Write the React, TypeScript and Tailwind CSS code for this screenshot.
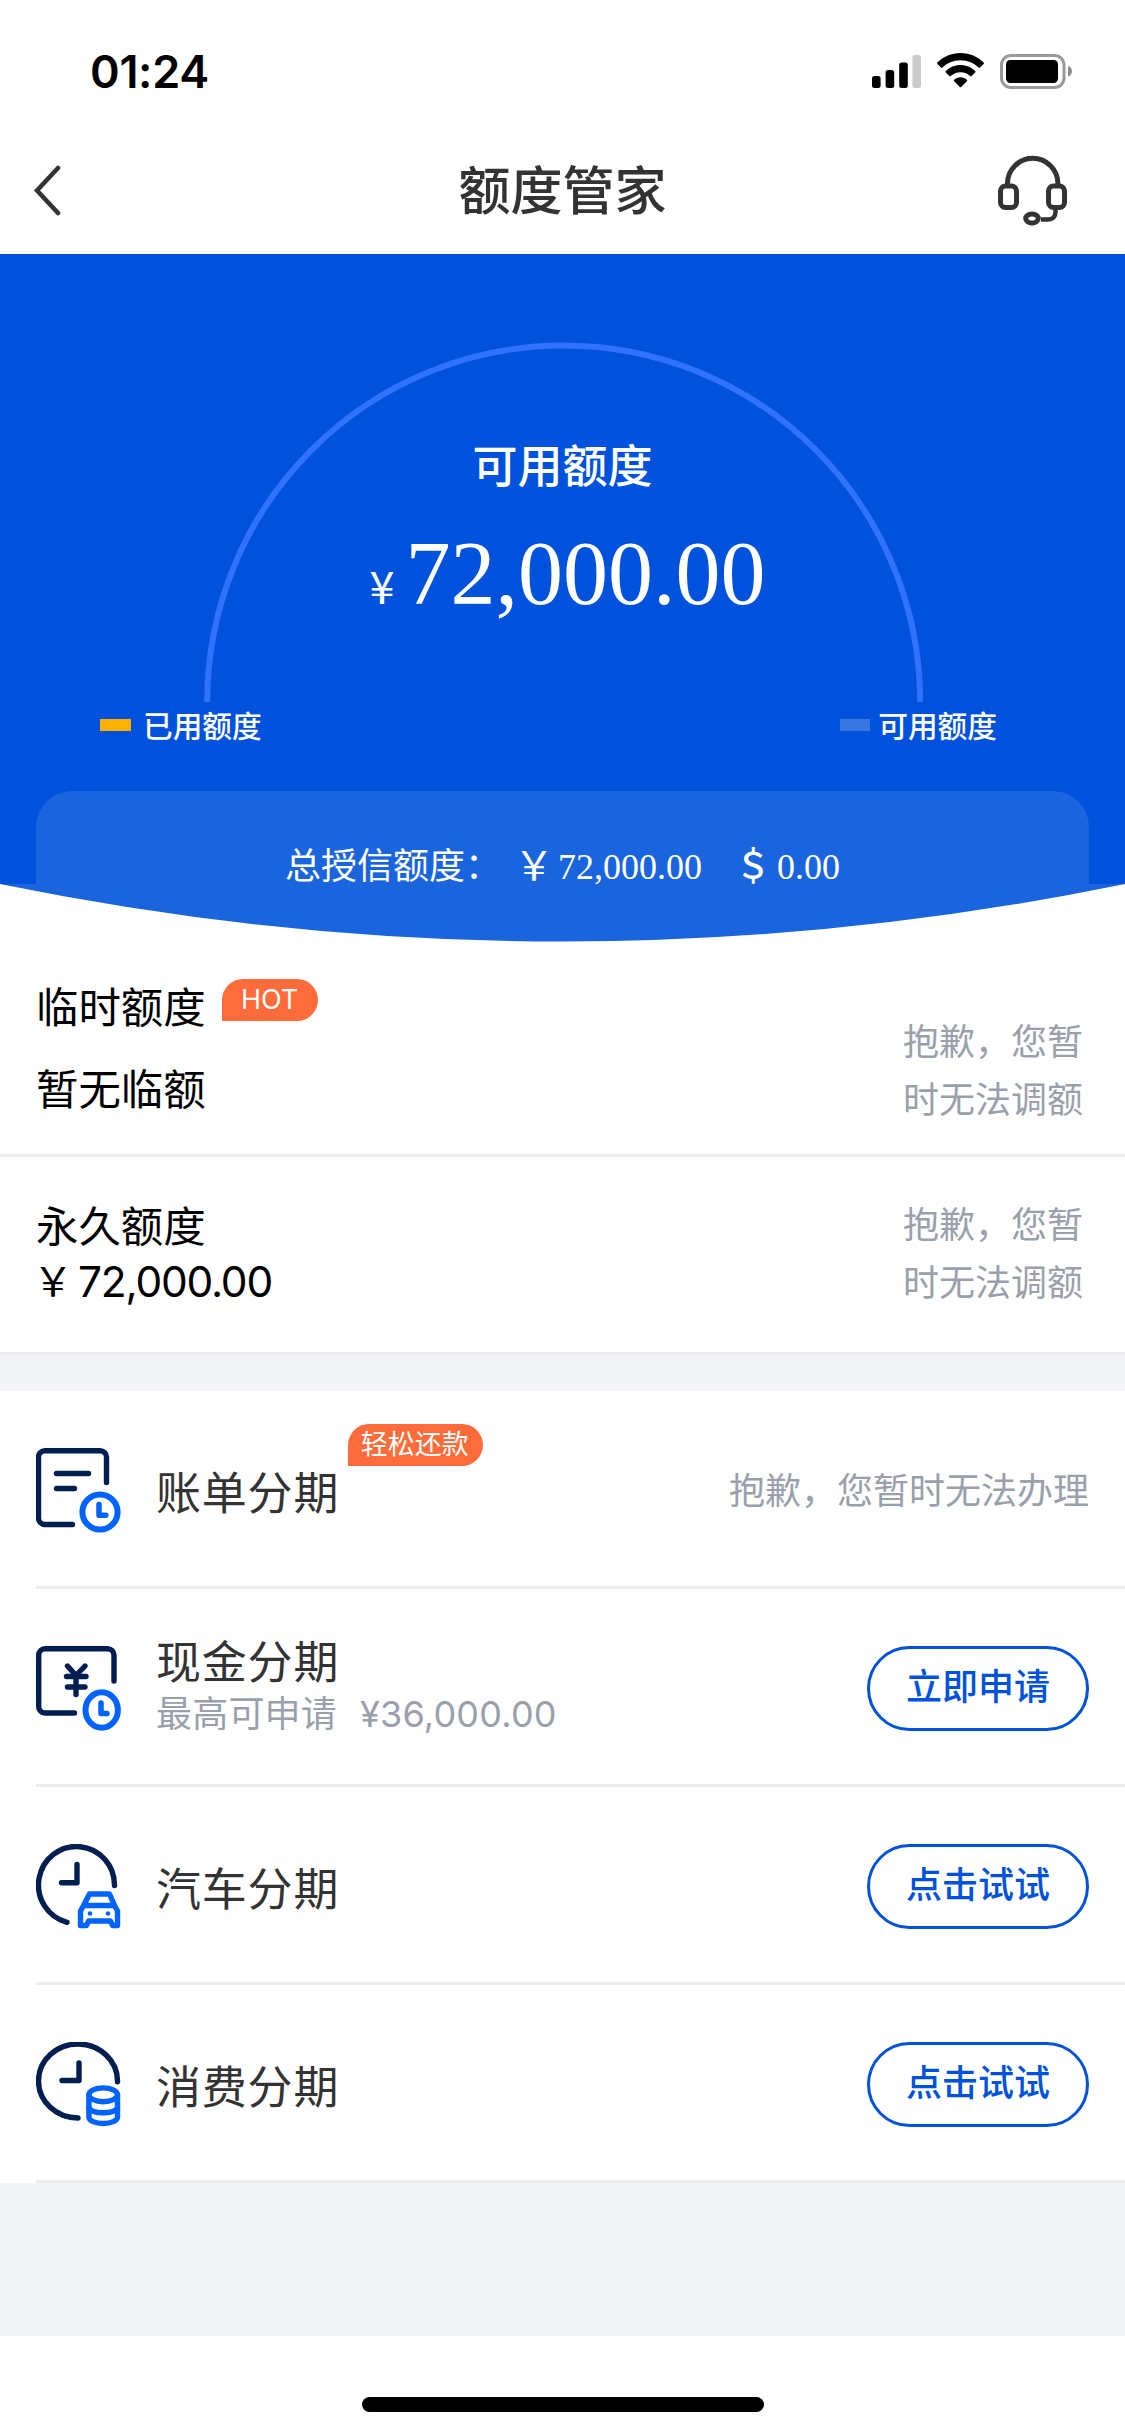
import { ReactNode } from "react";

const NAVY = "#001e50";
const BLUE = "#0062ff";

function StatusBar() {
  return (
    <div className="flex h-[126px] items-start justify-between pt-[50px] pr-[53px] pl-[90px]">
      <div className="text-[45px] leading-[44px] font-semibold tracking-[-0.3px] text-black">
        01:24
      </div>
      <div className="flex items-start">
        <svg className="mt-[5px] mr-4 h-[33px] w-[49px]" viewBox="0 0 49 33">
          <rect x="0" y="21" width="8.6" height="12" rx="2.5" />
          <rect x="13.6" y="15" width="8.6" height="18" rx="2.5" />
          <rect x="27.2" y="7.5" width="8.6" height="25.5" rx="2.5" />
          <rect x="40.4" y="0" width="8.6" height="33" rx="2.5" fill="#ccc" />
        </svg>
        <svg className="mt-[3px] mr-4 h-[35px] w-[47px]" viewBox="0 0 47 35">
          <path d="M23.5 0C32.5 0 40.8 3.6 46.6 9.5a1 1 0 0 1 0 1.4l-3.6 3.7a1 1 0 0 1-1.4 0C37 10 30.6 7.2 23.5 7.2S10 10 5.4 14.6a1 1 0 0 1-1.4 0L.4 10.9a1 1 0 0 1 0-1.4C6.2 3.6 14.5 0 23.5 0Z" />
          <path d="M23.5 12c5.6 0 10.9 2.3 14.7 6a1 1 0 0 1 0 1.4l-3.6 3.7a1 1 0 0 1-1.4 0c-2.5-2.4-5.9-3.9-9.7-3.9s-7.2 1.5-9.7 3.9a1 1 0 0 1-1.4 0l-3.6-3.7a1 1 0 0 1 0-1.4c3.8-3.7 9.1-6 14.7-6Z" />
          <path d="M23.5 24.3c2.5 0 4.7.9 6.3 2.4a1 1 0 0 1 0 1.5l-5.6 5.8a1 1 0 0 1-1.4 0l-5.6-5.8a1 1 0 0 1 0-1.5c1.6-1.5 3.8-2.4 6.3-2.4Z" />
        </svg>
        <svg className="mt-1 h-[35px] w-[72px]" viewBox="0 0 72 35">
          <rect x="1.5" y="1.5" width="62.5" height="32" rx="9.5" fill="none" stroke="#999" strokeWidth="3" />
          <rect x="6" y="6" width="52" height="23" rx="4.5" />
          <path d="M68 12c2.5.8 4 2.8 4 5.3s-1.5 4.5-4 5.3Z" fill="#8c8c8c" />
        </svg>
      </div>
    </div>
  );
}

function NavBar() {
  return (
    <div className="flex h-32 items-start justify-between pr-[57px] pl-[33px]">
      <svg className="mt-[39px] h-[51px] w-[95px]" viewBox="0 0 95 51" fill="none">
        <path d="M25 3 4 25.5 25 48" stroke="#333" strokeWidth="4.5" strokeLinecap="round" />
      </svg>
      <h1 className="mt-10 text-[52px] leading-[52px] font-medium text-[#333]">
        额度管家
      </h1>
      <svg
        className="mt-[29px] h-[71px] w-[71px]"
        viewBox="0 0 71 71"
        fill="none"
        stroke="#333"
        strokeWidth="5"
      >
        <path d="M10.5 30V28.500a25.200 25.200 0 0 1 50.400 0V30" />
        <rect x="3.5" y="31" width="16" height="21.5" rx="5" />
        <rect x="51.5" y="31" width="16" height="21.500" rx="5" />
        <path d="M58.5 53.5v3.5c0 5-3 7.500-7.500 7.500h-7" strokeWidth="4.500" />
        <ellipse cx="35" cy="63.500" rx="6.300" ry="4.500" />
      </svg>
    </div>
  );
}

function Hero() {
  return (
    <div className="bg-[#0052dc] pt-[88px] text-white">
      <div className="grid">
        <svg
          className="col-start-1 row-start-1 mx-auto h-[360px] w-[720px]"
          viewBox="0 0 720 360"
          fill="none"
        >
          <path d="M4.2 360a356.5 356.5 0 0 1 713 0" stroke="#3072ff" strokeWidth="6" />
        </svg>
        <div className="col-start-1 row-start-1 flex flex-col items-center">
          <div className="mt-[102px] text-[45px] leading-[46px] font-medium">
            可用额度
          </div>
          <div className="mt-[34px] flex items-baseline gap-[11px] pl-[10px] font-['Liberation_Serif',serif] text-[90px] leading-[100px]">
            <span className="font-['Noto_Sans_CJK_SC',sans-serif] text-[45px] font-normal">
              ¥
            </span>
            72,000.00
          </div>
        </div>
      </div>
      <div className="mt-[9px] flex justify-between pr-[128px] pl-[100px] text-[29.7px] leading-[30px] font-medium">
        <div className="flex items-center gap-3">
          <span className="mt-[-2px] h-3 w-[31px] bg-[#ffb000]" />
          已用额度
        </div>
        <div className="flex items-center gap-2">
          <span className="mt-[-2px] h-3 w-[30px] bg-[#3876e2]" />
          可用额度
        </div>
      </div>
      <div className="mx-9 mt-[50px] flex h-[93px] rounded-t-[36px] bg-[#1a64de] pt-[57px] pl-[249px] text-[36px] leading-9">
        <span className="w-[229px]">总授信额度：</span>
        <span className="w-11 text-[40px]">￥</span>
        <span className="w-[177px] font-['Liberation_Serif',serif] leading-[38px]">
          72,000.00
        </span>
        <span className="w-[42px] font-medium">＄</span>
        <span className="font-['Liberation_Serif',serif] leading-[38px]">0.00</span>
      </div>
    </div>
  );
}

function HeroCurve() {
  return (
    <svg className="block h-[58px] w-full" viewBox="0 0 1125 58">
      <path d="M0 0Q562.5 115 1125 0Z" fill="#1a64de" />
    </svg>
  );
}

function Tag({ className, children }: { className: string; children: ReactNode }) {
  return (
    <span
      className={`rounded-[21px] rounded-bl-none bg-[#ff6b3a] text-center text-[27px] text-white ${className}`}
    >
      {children}
    </span>
  );
}

function Quotas() {
  return (
    <>
      <div className="flex h-[215px] justify-between border-b-[3px] border-[#ededed] pr-[42px] pl-9">
        <div className="pt-[45px] text-[42.4px] leading-[42px] text-black">
          <div className="flex">
            临时额度
            <Tag className="mt-[-8px] ml-4 h-[42px] w-24 leading-[42px]">HOT</Tag>
          </div>
          <div className="mt-10">暂无临额</div>
        </div>
        <div className="w-[180px] pt-[71px] text-[36px] leading-[58px] text-[#9a9fac]">
          抱歉，您暂时无法调额
        </div>
      </div>
      <div className="flex h-[198px] justify-between border-b-[3px] border-[#ededed] pr-[42px] pl-9">
        <div className="pt-[49px] text-[42.4px] leading-[42px] text-black">
          <div>永久额度</div>
          <div className="mt-[13px] flex">
            <span className="ml-[-3px] w-[45px] text-[40px]">￥</span>
            <span className="tracking-[-1.2px]">72,000.00</span>
          </div>
        </div>
        <div className="w-[180px] pt-[39px] text-[36px] leading-[58px] text-[#9a9fac]">
          抱歉，您暂时无法调额
        </div>
      </div>
    </>
  );
}

function BillIcon() {
  return (
    <svg className="size-[85px]" viewBox="0 0 85 85" fill="none" strokeLinecap="round" strokeLinejoin="round">
      <g stroke={NAVY} strokeWidth="5.4">
        <path d="M36.5 76.5H9a6.500 6.500 0 0 1-6.500-6.500V9A6.500 6.500 0 0 1 9 2.700h55A6.500 6.500 0 0 1 70.500 9v25.500" />
        <path d="M20.500 25.500h32M20.500 40.500h18" />
      </g>
      <g stroke={BLUE} strokeWidth="6">
        <circle cx="64" cy="64" r="17.600" />
        <path d="M63 56.500v10.800h6.800" strokeWidth="5.500" />
      </g>
    </svg>
  );
}

function CashIcon() {
  return (
    <svg className="size-[85px]" viewBox="0 0 85 85" fill="none" strokeLinecap="round" strokeLinejoin="round">
      <g stroke={NAVY} strokeWidth="5.4">
        <path d="M38.500 67H9a6.500 6.500 0 0 1-6.300-6.500V9A6.500 6.500 0 0 1 9 2.700h62.500A6.500 6.500 0 0 1 78 9v26" />
        <path d="M31.500 20 40 29.500 49 20M40 30v18.500M30.500 30.500h19.500M31.500 41h17.500" />
      </g>
      <g stroke={BLUE} strokeWidth="6">
        <ellipse cx="65.700" cy="64" rx="16.200" ry="17.800" />
        <path d="M65 57v10.500h6" strokeWidth="5.500" />
      </g>
    </svg>
  );
}

function CarIcon() {
  return (
    <svg className="size-[85px]" viewBox="0 0 85 85" fill="none" strokeLinecap="round" strokeLinejoin="round">
      <g stroke={NAVY} strokeWidth="5.4">
        <path d="M78.500 41.500A38 38.500 0 1 0 31 78.300" />
        <path d="M41 20.500v18.200H25.500" />
      </g>
      <g stroke={BLUE} strokeWidth="5.4">
        <path d="M53.500 50h20l5.500 12.500 2.500 4.500v14.500h-5l-2-4.500h-22l-2 4.500h-6V67l2.500-4.500Z" />
        <path d="M49 61.500h29" />
      </g>
      <circle cx="54" cy="69.500" r="2.300" fill={BLUE} />
      <circle cx="72" cy="69.500" r="2.300" fill={BLUE} />
    </svg>
  );
}

function CoinsIcon() {
  return (
    <svg className="size-[85px]" viewBox="0 0 85 85" fill="none" strokeLinecap="round" strokeLinejoin="round">
      <g stroke={NAVY} strokeWidth="5.4">
        <path d="M81.500 39.700A39.500 37 0 1 0 42 76" />
        <path d="M43 21v17.500H26" />
      </g>
      <g stroke={BLUE} strokeWidth="5.4">
        <ellipse cx="67.200" cy="52.800" rx="14.300" ry="6.900" />
        <path d="M52.900 53v22c0 3.600 6.400 6.500 14.300 6.500s14.300-2.900 14.300-6.500V53" />
        <path d="M52.900 65c0 3.300 6.400 5.800 14.300 5.800S81.500 68.300 81.500 65" />
      </g>
    </svg>
  );
}

function PillButton({ children }: { children: ReactNode }) {
  return (
    <button className="block h-[85px] w-[222px] rounded-full border-[3px] border-[#0052dc] pb-[2px] text-[36px] leading-9 font-medium text-[#0052dc]">
      {children}
    </button>
  );
}

const rows = [
  { title: "账单分期", icon: <BillIcon />, tag: "轻松还款" },
  {
    title: "现金分期",
    icon: <CashIcon />,
    sub: "最高可申请",
    amount: "¥36,000.00",
    action: "立即申请",
  },
  { title: "汽车分期", icon: <CarIcon />, action: "点击试试" },
  { title: "消费分期", icon: <CoinsIcon />, action: "点击试试" },
];

function Installments() {
  return (
    <div className="bg-white pl-9">
      {rows.map((row) => (
        <div
          key={row.title}
          className="flex h-[198px] items-center border-b-[3px] border-[#ededed] pt-[3px] pr-9"
        >
          {row.icon}
          <div className="ml-[35px]">
            <div
              className={`flex text-[45px] leading-[46px] tracking-[0.8px] text-[#333] ${
                row.sub ? "mt-[-5px]" : "mt-2"
              }`}
            >
              {row.title}
              {row.tag && (
                <Tag className="mt-[-47px] ml-[9px] h-[42px] w-[135px] pr-[2px] leading-[42px] tracking-normal">
                  {row.tag}
                </Tag>
              )}
            </div>
            {row.sub && (
              <div className="mt-[10px] flex gap-[23px] text-[36px] leading-9 text-[#9a9fac]">
                <span className="tracking-[0.2px]">{row.sub}</span>
                <span className="tracking-[0.2px]">{row.amount}</span>
              </div>
            )}
          </div>
          <div className="ml-auto">
            {row.action ? (
              <PillButton>{row.action}</PillButton>
            ) : (
              <div className="pt-[2px] text-[36px] leading-9 text-[#9a9fac]">
                抱歉，您暂时无法办理
              </div>
            )}
          </div>
        </div>
      ))}
    </div>
  );
}

export default function App() {
  return (
    <div className="h-[2435px] w-[1125px] overflow-hidden bg-white font-['Inter','Noto_Sans_CJK_SC',sans-serif]">
      <StatusBar />
      <NavBar />
      <Hero />
      <HeroCurve />
      <Quotas />
      <div className="h-9 bg-[#f3f4f8]" />
      <Installments />
      <div className="h-[153px] bg-[#f3f4f8]" />
      <div className="mx-auto mt-[61px] h-[15px] w-[402px] rounded-full bg-black" />
    </div>
  );
}
